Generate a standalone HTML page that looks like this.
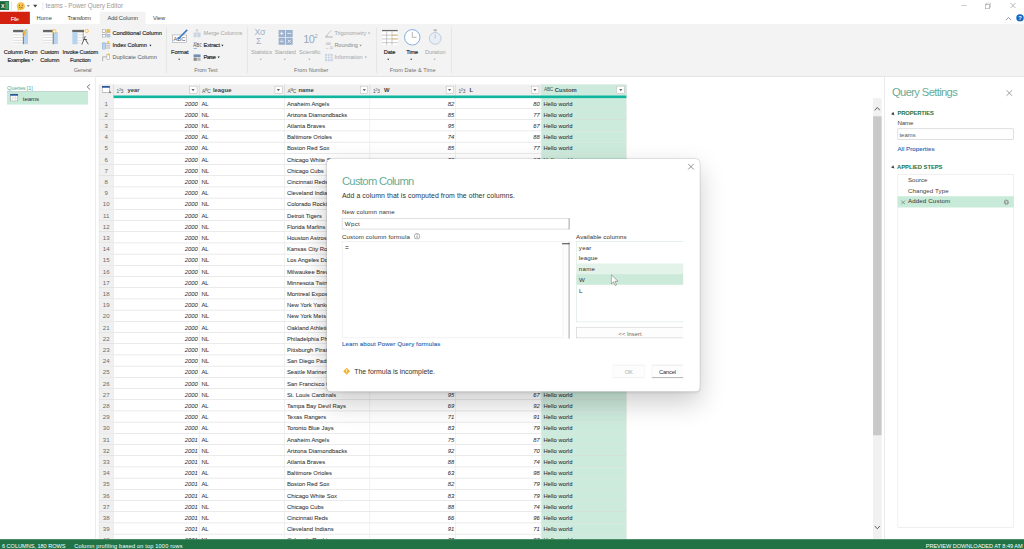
<!DOCTYPE html>
<html lang="en"><head><meta charset="utf-8"><title>teams - Power Query Editor</title>
<style>
*{box-sizing:border-box;margin:0;padding:0}
html,body{width:1024px;height:549px;overflow:hidden;background:#fff}
body{font-family:"Liberation Sans",sans-serif;font-size:11.5px;color:#333}
#stage{position:absolute;left:0;top:0;width:1920px;height:1030px;transform:scale(0.533333);transform-origin:0 0;background:#fff;overflow:hidden}
.abs{position:absolute}
i{font-style:normal}
.t{position:absolute;white-space:nowrap;line-height:16px;height:16px}
.g{color:#a3a3a3}
/* title bar */
#title{position:absolute;left:0;top:0;width:1920px;height:23px;background:#fff}
#tabs{position:absolute;left:0;top:22px;width:1920px;height:23px;background:#fff}
#file{position:absolute;left:0;top:0;width:56px;height:23px;background:#d4200f;color:#fff;text-align:center;line-height:23px}
#acttab{position:absolute;left:187px;top:0;width:86px;height:24px;background:#f3f3f3}
#ribbon{position:absolute;left:0;top:45px;width:1920px;height:99px;background:#f3f3f3;border-bottom:1px solid #d6d6d6}
.sep{position:absolute;top:6px;width:1px;height:86px;background:#dcdcdc}
.gl{position:absolute;top:80px;color:#777;font-size:11px;line-height:16px;white-space:nowrap;transform:translateX(-50%)}
.bl{position:absolute;white-space:nowrap;line-height:15px;text-align:center;transform:translateX(-50%)}
/* queries pane */
#qpane{position:absolute;left:0;top:144px;width:180px;height:867px;background:#fff;border-right:1px solid #dedede}
/* table */
#grid{position:absolute;left:185px;top:158px;width:990.2px;height:853px;overflow:hidden}
.h{position:absolute;left:0;top:0;height:21px;width:990px;background:#f0f0f0}
.hc{position:absolute;top:0;height:21px;border-right:1px solid #d0d0d0;line-height:21px;font-weight:bold;color:#444;font-size:11px}
.hc .dd{position:absolute;right:3px;top:3px;width:15px;height:15px;border:1px solid #b5b5b5;background:#fff}
.hc .dd:after{content:"";position:absolute;left:3.5px;top:5px;border-left:3px solid transparent;border-right:3px solid transparent;border-top:4px solid #666}
.teal{position:absolute;left:28.4px;top:21px;width:961.8px;height:5px;background:#0fb59d;z-index:2}
.r{position:absolute;left:0;height:21px;width:990px;white-space:nowrap}
.r i{position:absolute;top:0;height:21px;line-height:22px;border-bottom:1px solid #d8d8d8;border-right:1px solid #e4e4e4;overflow:hidden;font-size:11px;color:#333;-webkit-text-stroke:.1px}
.r .n{left:0;width:28.4px;background:#f0f0f0;color:#6a6a6a;-webkit-text-stroke:0;border-left:1px solid #d4d4d4;text-align:center;font-size:11.5px}
.r .num{text-align:right;font-style:italic;padding-right:2px}
.r .c{padding-left:4px}
.sel{background:#cdebdc}
/* right pane */
#rpane{position:absolute;left:1658px;top:144px;width:262px;height:867px;background:#fff;border-left:1px solid #d9d9d9}
/* status */
#status{position:absolute;left:0;top:1011px;width:1920px;height:19px;background:#217346;color:#fff;font-size:10.5px;line-height:19px}
/* dialog */
#dlg{position:absolute;left:613px;top:298px;width:699px;height:436px;background:#fff;border-radius:8px;box-shadow:0 0 0 1px rgba(0,0,0,.12),0 2px 5px rgba(0,0,0,.10),0 20px 50px rgba(0,0,0,.20)}
#dlgin{position:absolute;left:2px;top:0}
.inp{position:absolute;border:1px solid #c6c6c6;background:#fff}
.btn{position:absolute;border:1px solid #c9c9c9;background:#fdfdfd;text-align:center;font-size:11px}
.link{color:#2b66b1}
.r i:nth-child(2),.hc:nth-child(2){left:28.4px;width:160.3px}
.r i:nth-child(3),.hc:nth-child(3){left:188.7px;width:160.3px}
.r i:nth-child(4),.hc:nth-child(4){left:349.0px;width:160.3px}
.r i:nth-child(5),.hc:nth-child(5){left:509.3px;width:160.3px}
.r i:nth-child(6),.hc:nth-child(6){left:669.6px;width:160.3px}
.r i:nth-child(7),.hc:nth-child(7){left:829.9px;width:160.3px}
.hc:nth-child(1){left:0;width:28.4px;height:26px;background:#f0f0f0;border-left:1px solid #d4d4d4}
.hc .ty{position:absolute;left:5px;top:0;font-size:9px;font-weight:normal;color:#555;letter-spacing:-0.5px}
.hc .nm{position:absolute;left:25.5px;top:0}
.ar{position:absolute;top:7px;width:0;height:0;border-left:2.7px solid transparent;border-right:2.7px solid transparent;border-top:3.2px solid #555}
#stage>.ar{top:auto}

</style></head>
<body>
<div id="stage">
<!-- TITLE BAR -->
<div id="title">
  <svg class="abs" style="left:0;top:2px" width="17" height="17" viewBox="0 0 17 17"><rect x="0" y="0" width="17" height="17" fill="#1e7145"/><rect x="9" y="2" width="7" height="13" fill="#3fa26b"/><rect x="0" y="3" width="10" height="11" fill="#185c37"/><text x="5" y="12.5" font-family="Liberation Sans,sans-serif" font-size="10" font-weight="bold" fill="#fff" text-anchor="middle">X</text></svg>
  <div class="abs" style="left:21px;top:3px;width:1px;height:16px;background:#d5d5d5"></div>
  <svg class="abs" style="left:30px;top:3px" width="18" height="19" viewBox="0 0 18 19"><path d="M4 13l-1.5 5 5-3z" fill="#f3c344"/><circle cx="9" cy="8.6" r="7" fill="#f6c94c" stroke="#e3ad2b" stroke-width="0.8"/><circle cx="6.4" cy="7" r="1.1" fill="#6b5a2a"/><circle cx="11.6" cy="7" r="1.1" fill="#a5402a"/><path d="M5.5 10.3 Q9 14 12.5 10.3" fill="none" stroke="#6b4a00" stroke-width="1.2"/></svg>
  <div class="abs" style="left:50px;top:10px;border-left:3px solid transparent;border-right:3px solid transparent;border-top:3px solid #777"></div>
  <div class="abs" style="left:62px;top:9px;border-left:4.5px solid transparent;border-right:4.5px solid transparent;border-top:5px solid #444"></div>
  <div class="abs" style="left:80px;top:3px;width:1px;height:16px;background:#d5d5d5"></div>
  <!-- window controls -->
  <div class="abs" style="left:1802px;top:10px;width:11px;height:1px;background:#aaa"></div>
  <svg class="abs" style="left:1847px;top:5px" width="11" height="12" viewBox="0 0 11 12"><path d="M2.5 3V0.5H10.5V8.5H8" fill="none" stroke="#9a9a9a"/><rect x="0.5" y="3" width="7.5" height="8.5" fill="none" stroke="#8a8a8a"/></svg>
  <svg class="abs" style="left:1894px;top:5px" width="11" height="11" viewBox="0 0 11 11"><path d="M0.5 0.5L10.5 10.5M10.5 0.5L0.5 10.5" stroke="#888" stroke-width="1.1"/></svg>
</div>
<!-- TABS -->
<div id="tabs">
  <div id="file"></div>
  <div id="acttab"></div>
  <svg class="abs" style="left:1885px;top:9px" width="12" height="8" viewBox="0 0 12 8"><path d="M1 7L6 1.5L11 7" fill="none" stroke="#777" stroke-width="1.3"/></svg>
  <svg class="abs" style="left:1905px;top:4px" width="15" height="15" viewBox="0 0 15 15"><circle cx="7.5" cy="7.5" r="7" fill="#1565c0"/><text x="7.5" y="11.5" font-family="Liberation Sans,sans-serif" font-size="11" font-weight="bold" fill="#fff" text-anchor="middle">?</text></svg>
</div>
<!-- RIBBON -->
<div id="ribbon">
  <!-- big: Column From Examples -->
  <svg class="abs" style="left:24px;top:9px" width="31" height="30" viewBox="0 0 31 30"><rect x="0.5" y="2" width="28" height="27" fill="#fff"/><rect x="0.5" y="2" width="20" height="4.5" fill="#666"/><path d="M0.5 11.5h19M0.5 16.5h19M0.5 21.5h19M0.5 26.5h19" stroke="#c6c6c6" stroke-width="1.2"/><rect x="20" y="2" width="8.5" height="27" fill="#b8d3ee"/><path d="M19.8 6v23" stroke="#5a5a5a" stroke-width="1.5"/><path d="M24.5 0l-6.5 9h3.5l-4.5 10 9-12h-3.8l5.3-7z" fill="#f5b335"/></svg>
  <!-- big: Custom Column -->
  <svg class="abs" style="left:80px;top:9px" width="31" height="30" viewBox="0 0 31 30"><rect x="0.5" y="2" width="28" height="27" fill="#fff"/><rect x="0.5" y="2" width="20" height="4.5" fill="#666"/><path d="M0.5 11.5h19M0.5 16.5h19M0.5 21.5h19M0.5 26.5h19" stroke="#c6c6c6" stroke-width="1.2"/><rect x="20" y="6" width="8.5" height="23" fill="#b8d3ee"/><path d="M19.8 6v23" stroke="#5a5a5a" stroke-width="1.5"/><circle cx="22" cy="4.5" r="3.2" fill="#fff6df" stroke="#f2b53a" stroke-width="1.6"/></svg>
  <!-- big: Invoke Custom Function -->
  <svg class="abs" style="left:135px;top:9px" width="33" height="31" viewBox="0 0 33 31"><rect x="0.5" y="2" width="25" height="27" fill="#fff"/><rect x="0.5" y="2" width="22" height="4.5" fill="#666"/><rect x="0.5" y="6.5" width="10" height="22.5" fill="#b8d3ee"/><path d="M11 11.5h12M11 16.5h11M11 21.5h9M11 26.5h7" stroke="#c6c6c6" stroke-width="1.2"/><path d="M21 6.5v14" stroke="#777" stroke-width="1.2"/><circle cx="27.5" cy="4" r="3.2" fill="#fff6df" stroke="#f2b53a" stroke-width="1.6"/><path d="M18.5 29.5L25 13.5M22 20h6M24.5 19l6 10" stroke="#4a4a4a" stroke-width="1.7" fill="none"/></svg>
  <!-- small buttons -->
  <svg class="abs" style="left:191px;top:10px" width="16" height="16" viewBox="0 0 16 16"><rect x="0.5" y="0.5" width="6" height="5" fill="#fff" stroke="#8a8a8a"/><rect x="9.5" y="0.5" width="6" height="5" fill="#f2c04f" stroke="#c99822"/><rect x="0.5" y="9.5" width="6" height="5" fill="#fff" stroke="#8a8a8a"/><rect x="9.5" y="9.5" width="6" height="5" fill="#b9d3ec" stroke="#7da2c9"/><path d="M8 6v3" stroke="#777"/></svg>
  <svg class="abs" style="left:191px;top:32px" width="16" height="16" viewBox="0 0 16 16"><rect x="0.5" y="3.5" width="6" height="12" fill="#b9d3ec" stroke="#7da2c9"/><rect x="8" y="4" width="8" height="2" fill="#b5b5b5"/><rect x="8" y="8" width="8" height="2" fill="#b5b5b5"/><rect x="8" y="12" width="8" height="2" fill="#b5b5b5"/><circle cx="12" cy="2" r="2" fill="#f2c04f"/></svg>
  <svg class="abs" style="left:191px;top:55px" width="16" height="16" viewBox="0 0 16 16"><path d="M1.5 15V6.5H9" fill="none" stroke="#777"/><rect x="9.5" y="2.5" width="5" height="9" fill="#fff" stroke="#999"/><circle cx="13" cy="2" r="2" fill="#f2c04f"/></svg>
  <div class="sep" style="left:312px"></div>
  <!-- Format -->
  <svg class="abs" style="left:322px;top:8px" width="32" height="30" viewBox="0 0 32 30"><rect x="1.5" y="12.5" width="26" height="14" fill="#fff" stroke="#9a9a9a"/><text x="14.5" y="24" font-family="Liberation Sans,sans-serif" font-size="11" fill="#555" text-anchor="middle">ABC</text><path d="M10 20L28 2l2 2L13 21z" fill="#3b78c4"/></svg>
  <svg class="abs" style="left:362px;top:10px" width="16" height="16" viewBox="0 0 16 16"><rect x="1" y="6" width="5" height="9" fill="#c9d6e4"/><rect x="9" y="6" width="5" height="9" fill="#c9d6e4"/><path d="M7.5 0v14M5 3l2.5-3 2.5 3" stroke="#b0b0b0" fill="none"/></svg>
  <svg class="abs" style="left:362px;top:32px" width="16" height="16" viewBox="0 0 16 16"><text x="0" y="12" font-family="Liberation Sans,sans-serif" font-size="9" fill="#555">ABC</text><path d="M1 3h6M1 14h6" stroke="#3b78c4"/></svg>
  <svg class="abs" style="left:362px;top:55px" width="16" height="16" viewBox="0 0 16 16"><rect x="1" y="2" width="13" height="5" fill="#6f8fb3"/><rect x="1" y="8" width="6" height="6" fill="#8a8a8a"/><rect x="8" y="8" width="6" height="6" fill="#b5b5b5"/></svg>
  <div class="sep" style="left:464px"></div>
  <!-- number -->
  <div class="abs g" style="left:477px;top:8px;width:30px;height:34px;font-size:16.5px;line-height:15.5px;color:#9db0c9;letter-spacing:-0.3px">X&#963;<br><span style="padding-left:3px">&#931;</span></div>
  <svg class="abs" style="left:521.5px;top:11px" width="27.5" height="28.5" viewBox="0 0 31 32"><rect x="0" y="0" width="14.5" height="15" fill="#9bb0cc"/><rect x="16" y="0" width="14.5" height="15" fill="#9bb0cc"/><rect x="0" y="16.5" width="14.5" height="15" fill="#9bb0cc"/><rect x="16" y="16.5" width="14.5" height="15" fill="#9bb0cc"/><path d="M3 7.5h8M7 3.5v8M19 7.5h8M3 24h8M7 20.5v1M7 26.5v1M20 21l6 6M26 21l-6 6" stroke="#fff" stroke-width="1.6"/></svg>
  <div class="abs" style="left:568.5px;top:15.5px;font-size:20.5px;line-height:26px;color:#93a8c4;letter-spacing:-1.2px">10<span style="font-size:11px;position:relative;top:-10px;left:1px">2</span></div>
  <svg class="abs" style="left:609px;top:10px" width="16" height="16" viewBox="0 0 16 16"><path d="M1 14.5h14L1 14.5L12 2" fill="none" stroke="#b0b0b0" stroke-width="1.2"/><path d="M5 14a5 5 0 0 0-1.5-3.5" fill="none" stroke="#b0b0b0"/></svg>
  <div class="abs" style="left:609px;top:33px;font-size:8px;line-height:8px;color:#9a9a9a">.00<br>&#8594;.0</div>
  <svg class="abs" style="left:609px;top:55px" width="16" height="16" viewBox="0 0 16 16"><rect x="0" y="1" width="15" height="14" fill="#c7d3e2"/><path d="M0 5.5h15M0 10h15M5 1v14M10 1v14" stroke="#fff"/></svg>
  <div class="sep" style="left:705px"></div>
  <!-- date time -->
  <svg class="abs" style="left:716px;top:10px" width="30" height="30" viewBox="0 0 30 30"><rect x="0" y="0" width="30" height="30" fill="#fff"/><rect x="0" y="1" width="30" height="2.5" fill="#666"/><path d="M0 11h30M0 18h30M0 25h30M9 4v26M19 4v26" stroke="#9a9a9a" stroke-width="1"/><path d="M19 11h11M19 18h11" stroke="#e6a11e"/></svg>
  <svg class="abs" style="left:757px;top:9px" width="32" height="32" viewBox="0 0 32 32"><circle cx="16" cy="16" r="14.5" fill="#fff" stroke="#6f9fd6" stroke-width="1.6"/><path d="M16 6v10h8" fill="none" stroke="#a0a0a0" stroke-width="1.4"/></svg>
  <svg class="abs" style="left:803px;top:8px" width="26" height="32" viewBox="0 0 26 32"><circle cx="13" cy="19" r="11" fill="#e8eef5" stroke="#b9c6d6" stroke-width="1.6"/><rect x="10" y="2" width="6" height="3" fill="#b5b5b5"/><path d="M13 5v3M13 19v-7" stroke="#b5b5b5" stroke-width="1.4"/></svg>
  <div class="sep" style="left:846px"></div>
</div>
<!-- QUERIES PANE -->
<div id="qpane">
  <svg class="abs" style="left:162px;top:13px" width="8" height="12" viewBox="0 0 8 12"><path d="M7 1L1.5 6L7 11" fill="none" stroke="#555" stroke-width="1.5"/></svg>
  <div class="abs" style="left:13px;top:27px;width:152px;height:25px;background:#c8ead9;border-top:1px solid #b9c4be"></div>
  <svg class="abs" style="left:19px;top:32px" width="15" height="14" viewBox="0 0 15 14"><rect x="0.5" y="0.5" width="14" height="13" fill="#fff" stroke="#7a7a7a"/><rect x="0" y="0" width="15" height="3.5" fill="#2b579a"/><path d="M0 8h15M5 3.5v10M10 3.5v10" stroke="#c8c8c8" stroke-width="0.8"/></svg>
</div>
<!-- GRID -->
<div id="grid">
  <div class="h">
    <div class="hc"><svg class="abs" style="left:5px;top:3px" width="18" height="15" viewBox="0 0 18 15"><rect x="0.5" y="0.5" width="14" height="12" fill="#fff" stroke="#8a8a8a"/><rect x="0" y="0" width="15" height="3.5" fill="#2b579a"/><path d="M13 11h5l-2.5 3.5z" fill="#555"/></svg></div>
    <div class="hc"><span class="ty">1<sup>2</sup>3</span><span class="nm">year</span><span class="dd"></span></div>
    <div class="hc"><span class="ty">A<sup>B</sup>C</span><span class="nm">league</span><span class="dd"></span></div>
    <div class="hc"><span class="ty">A<sup>B</sup>C</span><span class="nm">name</span><span class="dd"></span></div>
    <div class="hc"><span class="ty">1<sup>2</sup>3</span><span class="nm">W</span><span class="dd"></span></div>
    <div class="hc"><span class="ty">1<sup>2</sup>3</span><span class="nm">L</span><span class="dd"></span></div>
    <div class="hc sel"><span class="ty">ABC<br></span><span class="nm">Custom</span><span class="dd"></span></div>
  </div>
  <div class="teal"></div>
<div class="r" style="top:25px"><i class="n">1</i><i class="c num">2000</i><i class="c">AL</i><i class="c">Anaheim Angels</i><i class="c num">82</i><i class="c num">80</i><i class="c sel">Hello world</i></div>
<div class="r" style="top:46px"><i class="n">2</i><i class="c num">2000</i><i class="c">NL</i><i class="c">Arizona Diamondbacks</i><i class="c num">85</i><i class="c num">77</i><i class="c sel">Hello world</i></div>
<div class="r" style="top:67px"><i class="n">3</i><i class="c num">2000</i><i class="c">NL</i><i class="c">Atlanta Braves</i><i class="c num">95</i><i class="c num">67</i><i class="c sel">Hello world</i></div>
<div class="r" style="top:88px"><i class="n">4</i><i class="c num">2000</i><i class="c">AL</i><i class="c">Baltimore Orioles</i><i class="c num">74</i><i class="c num">88</i><i class="c sel">Hello world</i></div>
<div class="r" style="top:109px"><i class="n">5</i><i class="c num">2000</i><i class="c">AL</i><i class="c">Boston Red Sox</i><i class="c num">85</i><i class="c num">77</i><i class="c sel">Hello world</i></div>
<div class="r" style="top:130px"><i class="n">6</i><i class="c num">2000</i><i class="c">AL</i><i class="c">Chicago White Sox</i><i class="c num">95</i><i class="c num">67</i><i class="c sel">Hello world</i></div>
<div class="r" style="top:151px"><i class="n">7</i><i class="c num">2000</i><i class="c">NL</i><i class="c">Chicago Cubs</i><i class="c num">65</i><i class="c num">97</i><i class="c sel">Hello world</i></div>
<div class="r" style="top:172px"><i class="n">8</i><i class="c num">2000</i><i class="c">NL</i><i class="c">Cincinnati Reds</i><i class="c num">85</i><i class="c num">77</i><i class="c sel">Hello world</i></div>
<div class="r" style="top:193px"><i class="n">9</i><i class="c num">2000</i><i class="c">AL</i><i class="c">Cleveland Indians</i><i class="c num">90</i><i class="c num">72</i><i class="c sel">Hello world</i></div>
<div class="r" style="top:214px"><i class="n">10</i><i class="c num">2000</i><i class="c">NL</i><i class="c">Colorado Rockies</i><i class="c num">82</i><i class="c num">80</i><i class="c sel">Hello world</i></div>
<div class="r" style="top:235px"><i class="n">11</i><i class="c num">2000</i><i class="c">AL</i><i class="c">Detroit Tigers</i><i class="c num">79</i><i class="c num">83</i><i class="c sel">Hello world</i></div>
<div class="r" style="top:256px"><i class="n">12</i><i class="c num">2000</i><i class="c">NL</i><i class="c">Florida Marlins</i><i class="c num">79</i><i class="c num">82</i><i class="c sel">Hello world</i></div>
<div class="r" style="top:277px"><i class="n">13</i><i class="c num">2000</i><i class="c">NL</i><i class="c">Houston Astros</i><i class="c num">72</i><i class="c num">90</i><i class="c sel">Hello world</i></div>
<div class="r" style="top:298px"><i class="n">14</i><i class="c num">2000</i><i class="c">AL</i><i class="c">Kansas City Royals</i><i class="c num">77</i><i class="c num">85</i><i class="c sel">Hello world</i></div>
<div class="r" style="top:319px"><i class="n">15</i><i class="c num">2000</i><i class="c">NL</i><i class="c">Los Angeles Dodgers</i><i class="c num">86</i><i class="c num">76</i><i class="c sel">Hello world</i></div>
<div class="r" style="top:340px"><i class="n">16</i><i class="c num">2000</i><i class="c">NL</i><i class="c">Milwaukee Brewers</i><i class="c num">73</i><i class="c num">89</i><i class="c sel">Hello world</i></div>
<div class="r" style="top:361px"><i class="n">17</i><i class="c num">2000</i><i class="c">AL</i><i class="c">Minnesota Twins</i><i class="c num">69</i><i class="c num">93</i><i class="c sel">Hello world</i></div>
<div class="r" style="top:382px"><i class="n">18</i><i class="c num">2000</i><i class="c">NL</i><i class="c">Montreal Expos</i><i class="c num">67</i><i class="c num">95</i><i class="c sel">Hello world</i></div>
<div class="r" style="top:403px"><i class="n">19</i><i class="c num">2000</i><i class="c">AL</i><i class="c">New York Yankees</i><i class="c num">87</i><i class="c num">74</i><i class="c sel">Hello world</i></div>
<div class="r" style="top:424px"><i class="n">20</i><i class="c num">2000</i><i class="c">NL</i><i class="c">New York Mets</i><i class="c num">94</i><i class="c num">68</i><i class="c sel">Hello world</i></div>
<div class="r" style="top:445px"><i class="n">21</i><i class="c num">2000</i><i class="c">AL</i><i class="c">Oakland Athletics</i><i class="c num">91</i><i class="c num">70</i><i class="c sel">Hello world</i></div>
<div class="r" style="top:466px"><i class="n">22</i><i class="c num">2000</i><i class="c">NL</i><i class="c">Philadelphia Phillies</i><i class="c num">65</i><i class="c num">97</i><i class="c sel">Hello world</i></div>
<div class="r" style="top:487px"><i class="n">23</i><i class="c num">2000</i><i class="c">NL</i><i class="c">Pittsburgh Pirates</i><i class="c num">69</i><i class="c num">93</i><i class="c sel">Hello world</i></div>
<div class="r" style="top:508px"><i class="n">24</i><i class="c num">2000</i><i class="c">NL</i><i class="c">San Diego Padres</i><i class="c num">76</i><i class="c num">86</i><i class="c sel">Hello world</i></div>
<div class="r" style="top:529px"><i class="n">25</i><i class="c num">2000</i><i class="c">AL</i><i class="c">Seattle Mariners</i><i class="c num">91</i><i class="c num">71</i><i class="c sel">Hello world</i></div>
<div class="r" style="top:550px"><i class="n">26</i><i class="c num">2000</i><i class="c">NL</i><i class="c">San Francisco Giants</i><i class="c num">97</i><i class="c num">65</i><i class="c sel">Hello world</i></div>
<div class="r" style="top:571px"><i class="n">27</i><i class="c num">2000</i><i class="c">NL</i><i class="c">St. Louis Cardinals</i><i class="c num">95</i><i class="c num">67</i><i class="c sel">Hello world</i></div>
<div class="r" style="top:592px"><i class="n">28</i><i class="c num">2000</i><i class="c">AL</i><i class="c">Tampa Bay Devil Rays</i><i class="c num">69</i><i class="c num">92</i><i class="c sel">Hello world</i></div>
<div class="r" style="top:613px"><i class="n">29</i><i class="c num">2000</i><i class="c">AL</i><i class="c">Texas Rangers</i><i class="c num">71</i><i class="c num">91</i><i class="c sel">Hello world</i></div>
<div class="r" style="top:634px"><i class="n">30</i><i class="c num">2000</i><i class="c">AL</i><i class="c">Toronto Blue Jays</i><i class="c num">83</i><i class="c num">79</i><i class="c sel">Hello world</i></div>
<div class="r" style="top:655px"><i class="n">31</i><i class="c num">2001</i><i class="c">AL</i><i class="c">Anaheim Angels</i><i class="c num">75</i><i class="c num">87</i><i class="c sel">Hello world</i></div>
<div class="r" style="top:676px"><i class="n">32</i><i class="c num">2001</i><i class="c">NL</i><i class="c">Arizona Diamondbacks</i><i class="c num">92</i><i class="c num">70</i><i class="c sel">Hello world</i></div>
<div class="r" style="top:697px"><i class="n">33</i><i class="c num">2001</i><i class="c">NL</i><i class="c">Atlanta Braves</i><i class="c num">88</i><i class="c num">74</i><i class="c sel">Hello world</i></div>
<div class="r" style="top:718px"><i class="n">34</i><i class="c num">2001</i><i class="c">AL</i><i class="c">Baltimore Orioles</i><i class="c num">63</i><i class="c num">98</i><i class="c sel">Hello world</i></div>
<div class="r" style="top:739px"><i class="n">35</i><i class="c num">2001</i><i class="c">AL</i><i class="c">Boston Red Sox</i><i class="c num">82</i><i class="c num">79</i><i class="c sel">Hello world</i></div>
<div class="r" style="top:760px"><i class="n">36</i><i class="c num">2001</i><i class="c">AL</i><i class="c">Chicago White Sox</i><i class="c num">83</i><i class="c num">79</i><i class="c sel">Hello world</i></div>
<div class="r" style="top:781px"><i class="n">37</i><i class="c num">2001</i><i class="c">NL</i><i class="c">Chicago Cubs</i><i class="c num">88</i><i class="c num">74</i><i class="c sel">Hello world</i></div>
<div class="r" style="top:802px"><i class="n">38</i><i class="c num">2001</i><i class="c">NL</i><i class="c">Cincinnati Reds</i><i class="c num">66</i><i class="c num">96</i><i class="c sel">Hello world</i></div>
<div class="r" style="top:823px"><i class="n">39</i><i class="c num">2001</i><i class="c">AL</i><i class="c">Cleveland Indians</i><i class="c num">91</i><i class="c num">71</i><i class="c sel">Hello world</i></div>
<div class="r" style="top:844px"><i class="n">40</i><i class="c num">2001</i><i class="c">NL</i><i class="c">Colorado Rockies</i><i class="c num">73</i><i class="c num">89</i><i class="c sel">Hello world</i></div>
</div>
<!-- grid scrollbar -->
<div class="abs" style="left:1637px;top:184px;width:16px;height:827px;background:#f1f1f1"></div>
<div class="abs" style="left:1637px;top:218px;width:16px;height:598px;background:#c9c9c9"></div>
<svg class="abs" style="left:1639px;top:200px" width="12" height="8" viewBox="0 0 12 8"><path d="M1 7L6 1.5L11 7" fill="none" stroke="#444" stroke-width="1.6"/></svg>
<svg class="abs" style="left:1639px;top:985px" width="12" height="8" viewBox="0 0 12 8"><path d="M1 1L6 6.5L11 1" fill="none" stroke="#444" stroke-width="1.6"/></svg>
<!-- RIGHT PANE -->
<div id="rpane">
  <svg class="abs" style="left:227px;top:24px" width="13" height="13" viewBox="0 0 13 13"><path d="M1 1L12 12M12 1L1 12" stroke="#7a7a7a" stroke-width="1.3"/></svg>
  <div class="abs" style="left:13px;top:67px;border-left:3px solid transparent;border-right:3px solid transparent;border-bottom:6px solid #444;transform:rotate(135deg)"></div>
  <div class="inp" style="left:24px;top:97px;width:218px;height:21px"></div>
  <div class="abs" style="left:13px;top:167px;border-left:3px solid transparent;border-right:3px solid transparent;border-bottom:6px solid #444;transform:rotate(135deg)"></div>
  <div class="inp" style="left:24px;top:183px;width:218px;height:663px;border-color:#e3e3e3"></div>
  <div class="abs" style="left:24px;top:224px;width:218px;height:21px;background:#c8ead9"></div>
  <svg class="abs" style="left:30px;top:231px" width="9" height="9" viewBox="0 0 9 9"><path d="M1 1L8 8M8 1L1 8" stroke="#666" stroke-width="1.2"/></svg>
  <svg class="abs" style="left:222px;top:229px" width="12" height="12" viewBox="0 0 12 12"><circle cx="6" cy="6" r="3.6" fill="none" stroke="#8a8a8a" stroke-width="2.4" stroke-dasharray="1.9 0.93"/><circle cx="6" cy="6" r="2.6" fill="none" stroke="#8a8a8a" stroke-width="1"/></svg>
</div>
<!-- STATUS -->
<div id="status">
</div>
<div class="t" id="ttl" style="left:85.5px;top:3.1px;font-size:12px;color:#9c9c9c;letter-spacing:-0.115px;">teams - Power Query Editor</div>
<div class="t" id="fileT" style="left:20.1px;top:27.0px;font-size:10.8px;color:#fff;letter-spacing:-0.634px;">File</div>
<div class="t" id="tb1" style="left:68.4px;top:26.4px;font-size:10.8px;color:#444;letter-spacing:0.018px;">Home</div>
<div class="t" id="tb2" style="left:126.6px;top:26.4px;font-size:10.8px;color:#444;letter-spacing:-0.557px;">Transform</div>
<div class="t" id="tb3" style="left:201.6px;top:26.4px;font-size:10.8px;color:#444;letter-spacing:-0.235px;">Add Column</div>
<div class="t" id="tb4" style="left:286.9px;top:26.4px;font-size:10.8px;color:#444;letter-spacing:-0.205px;">View</div>
<div class="t" id="b1a" style="left:7.0px;top:89.2px;font-size:10.6px;color:#2a2a2a;letter-spacing:-0.085px;-webkit-text-stroke:.3px;">Column From</div>
<div class="t" id="b1b" style="left:14.1px;top:104.2px;font-size:10.6px;color:#2a2a2a;letter-spacing:-0.577px;-webkit-text-stroke:.3px;">Examples<b class="ar" style="left:44.8px;border-top-color:#2a2a2a"></b></div>
<div class="t" id="b2a" style="left:76.1px;top:89.2px;font-size:10.6px;color:#2a2a2a;letter-spacing:-0.449px;-webkit-text-stroke:.3px;">Custom</div>
<div class="t" id="b2b" style="left:75.5px;top:104.2px;font-size:10.6px;color:#2a2a2a;letter-spacing:-0.111px;-webkit-text-stroke:.3px;">Column</div>
<div class="t" id="b3a" style="left:117.2px;top:89.2px;font-size:10.6px;color:#2a2a2a;letter-spacing:-0.327px;-webkit-text-stroke:.3px;">Invoke Custom</div>
<div class="t" id="b3b" style="left:131.2px;top:104.2px;font-size:10.6px;color:#2a2a2a;letter-spacing:-0.269px;-webkit-text-stroke:.3px;">Function</div>
<div class="t" id="s1" style="left:210.8px;top:54.4px;font-size:10.6px;color:#2a2a2a;letter-spacing:0.004px;-webkit-text-stroke:.3px;">Conditional Column</div>
<div class="t" id="s2" style="left:210.8px;top:76.7px;font-size:10.6px;color:#2a2a2a;letter-spacing:-0.084px;-webkit-text-stroke:.3px;">Index Column<b class="ar" style="left:69.6px;border-top-color:#2a2a2a"></b></div>
<div class="t" id="s3" style="left:210.8px;top:99.0px;font-size:10.6px;color:#5a5a5a;letter-spacing:-0.030px;">Duplicate Column</div>
<div class="t" id="f1" style="left:320.8px;top:89.4px;font-size:10.6px;color:#2a2a2a;letter-spacing:-0.136px;-webkit-text-stroke:.3px;">Format</div>
<div class="t" id="m1" style="left:381.8px;top:54.4px;font-size:10.6px;color:#a6a6a6;letter-spacing:-0.185px;">Merge Columns</div>
<div class="t" id="m2" style="left:381.8px;top:76.7px;font-size:10.6px;color:#2a2a2a;letter-spacing:-0.370px;-webkit-text-stroke:.3px;">Extract<b class="ar" style="left:33.4px;border-top-color:#2a2a2a"></b></div>
<div class="t" id="m3" style="left:381.8px;top:99.0px;font-size:10.6px;color:#2a2a2a;letter-spacing:-1.194px;-webkit-text-stroke:.3px;">Parse<b class="ar" style="left:26.3px;border-top-color:#2a2a2a"></b></div>
<div class="t" id="n1" style="left:470.6px;top:89.4px;font-size:10.6px;color:#a6a6a6;letter-spacing:-0.317px;">Statistics</div>
<div class="t" id="n2" style="left:515.2px;top:89.4px;font-size:10.6px;color:#a6a6a6;letter-spacing:-0.483px;">Standard</div>
<div class="t" id="n3" style="left:560.8px;top:89.4px;font-size:10.6px;color:#a6a6a6;letter-spacing:-0.258px;">Scientific</div>
<div class="t" id="n4" style="left:627.0px;top:54.4px;font-size:10.6px;color:#a6a6a6;letter-spacing:-0.200px;">Trigonometry<b class="ar" style="left:63.3px;border-top-color:#a6a6a6"></b></div>
<div class="t" id="n5" style="left:627.0px;top:76.7px;font-size:10.6px;color:#8a8a8a;letter-spacing:-0.210px;">Rounding<b class="ar" style="left:46.7px;border-top-color:#8a8a8a"></b></div>
<div class="t" id="n6" style="left:627.0px;top:99.0px;font-size:10.6px;color:#a6a6a6;letter-spacing:0.015px;">Information<b class="ar" style="left:57.2px;border-top-color:#a6a6a6"></b></div>
<div class="t" id="d1" style="left:719.5px;top:89.4px;font-size:10.6px;color:#222;letter-spacing:-0.237px;-webkit-text-stroke:.3px;">Date</div>
<div class="t" id="d2" style="left:761.7px;top:89.4px;font-size:10.6px;color:#222;letter-spacing:-0.268px;-webkit-text-stroke:.3px;">Time</div>
<div class="t" id="d3" style="left:796.9px;top:89.4px;font-size:10.6px;color:#a6a6a6;letter-spacing:-0.190px;">Duration</div>
<div class="t" id="gl1" style="left:138.3px;top:124.3px;font-size:10.4px;color:#707070;letter-spacing:-0.639px;">General</div>
<div class="t" id="gl2" style="left:364.2px;top:124.3px;font-size:10.4px;color:#707070;letter-spacing:-0.305px;">From Text</div>
<div class="t" id="gl3" style="left:551.4px;top:124.3px;font-size:10.4px;color:#707070;letter-spacing:0.039px;">From Number</div>
<div class="t" id="gl4" style="left:730.8px;top:124.3px;font-size:10.4px;color:#707070;letter-spacing:0.108px;">From Date &amp; Time</div>
<div class="t" id="q1" style="left:13.1px;top:155.8px;font-size:10.8px;color:#62ad96;letter-spacing:-0.440px;">Queries [1]</div>
<div class="t" id="q2" style="left:42.9px;top:177.5px;font-size:11.5px;color:#333;letter-spacing:-0.253px;">teams</div>
<div class="t" id="r0" style="left:1672.5px;top:164.7px;font-size:21px;color:#66ad98;letter-spacing:-1.192px;">Query Settings</div>
<div class="t" id="r1" style="left:1682.6px;top:203.9px;font-size:11px;color:#217346;letter-spacing:-0.280px;font-weight:bold;">PROPERTIES</div>
<div class="t" id="r2" style="left:1682.6px;top:222.9px;font-size:11.5px;color:#444;letter-spacing:-0.196px;">Name</div>
<div class="t" id="r3" style="left:1686.4px;top:243.7px;font-size:11px;color:#555;letter-spacing:0.090px;">teams</div>
<div class="t" id="r4" style="left:1682.6px;top:270.5px;font-size:11.5px;color:#2b66b1;letter-spacing:0.087px;-webkit-text-stroke:.2px;">All Properties</div>
<div class="t" id="r5" style="left:1681.9px;top:304.8px;font-size:11px;color:#217346;letter-spacing:-0.119px;font-weight:bold;">APPLIED STEPS</div>
<div class="t" id="r6" style="left:1702.3px;top:329.7px;font-size:11.5px;color:#444;letter-spacing:0.057px;">Source</div>
<div class="t" id="r7" style="left:1702.3px;top:349.8px;font-size:11.5px;color:#444;letter-spacing:0.148px;">Changed Type</div>
<div class="t" id="r8" style="left:1702.3px;top:368.9px;font-size:11.5px;color:#333;letter-spacing:0.298px;">Added Custom</div>
<div class="t" id="st1" style="left:3.8px;top:1015.2px;font-size:10.5px;color:#fff;letter-spacing:-0.072px;">6 COLUMNS, 180 ROWS</div>
<div class="t" id="st2" style="left:139.1px;top:1014.6px;font-size:10.5px;color:#fff;letter-spacing:0.321px;">Column profiling based on top 1000 rows</div>
<div class="t" id="st3" style="left:1735.7px;top:1015.2px;font-size:10.5px;color:#fff;letter-spacing:-0.081px;">PREVIEW DOWNLOADED AT 8:49 AM</div>
<b class="ar" style="left:334.3px;top:110.2px;border-top-color:#444"></b>
<b class="ar" style="left:487.1px;top:110.2px;border-top-color:#a6a6a6"></b>
<b class="ar" style="left:532.1px;top:110.2px;border-top-color:#a6a6a6"></b>
<b class="ar" style="left:577.8px;top:110.2px;border-top-color:#a6a6a6"></b>
<b class="ar" style="left:726.4px;top:110.2px;border-top-color:#333"></b>
<b class="ar" style="left:769.3px;top:110.2px;border-top-color:#333"></b>
<b class="ar" style="left:812.6px;top:110.2px;border-top-color:#a6a6a6"></b>
<!-- DIALOG -->
<div id="dlg"><div id="dlgin">
  <svg class="abs" style="left:674px;top:8px" width="13" height="13" viewBox="0 0 13 13"><path d="M1 1L12 12M12 1L1 12" stroke="#666" stroke-width="1.3"/></svg>
  <div class="inp" style="left:26px;top:111px;width:427px;height:21px"></div>
  <svg class="abs" style="left:161px;top:139px" width="12" height="12" viewBox="0 0 12 12"><circle cx="6" cy="6" r="5.2" fill="none" stroke="#666" stroke-width="1"/><path d="M6 5v4" stroke="#555" stroke-width="1.3"/><circle cx="6" cy="3.2" r="0.8" fill="#555"/></svg>
  <div class="inp" style="left:26px;top:154px;width:427px;height:182px;border-color:#e6e6e6"></div>
  <div class="abs" style="left:440px;top:155px;width:12px;height:181px;background:#fdfdfd;border-left:1px solid #ececec"></div>
  <div class="abs" style="left:451px;top:156px;width:1.6px;height:181px;background:#b4b4b4"></div>
  <div class="abs" style="left:451px;top:111px;width:1.6px;height:21px;background:#b4b4b4"></div>
  <div class="abs" style="left:439px;top:157.5px;width:13.5px;height:2.2px;background:#4a4a4a"></div>
  <div class="inp" style="left:465px;top:154px;width:201px;height:152px;border-color:#cfe5da;border-right:none"></div>
  <div class="abs" style="left:466px;top:196px;width:200px;height:20px;background:#e3f3ea"></div>
  <div class="abs" style="left:466px;top:216px;width:200px;height:20px;background:#cbead9"></div>
  <div class="btn" style="left:465px;top:315px;width:201px;height:21px;line-height:19px;color:#777;border-right:none"></div>
  <svg class="abs" style="left:28px;top:391px" width="14" height="14" viewBox="0 0 14 14"><path d="M7 0.5L13.5 7L7 13.5L0.5 7z" fill="#f0b429"/><path d="M7 3.5v4.5" stroke="#fff" stroke-width="1.6"/><circle cx="7" cy="10.2" r="0.9" fill="#fff"/></svg>
  <div class="btn" style="left:534px;top:386px;width:60px;height:25px;border-color:#e3e3e3 #f4f4f4"></div>
  <div class="btn" style="left:607px;top:386px;width:59px;height:25px;border-color:#dcdcdc #f0f0f0;border-bottom:2px solid #b9b9b9;border-right:none"></div>
  <!-- mouse cursor -->
  <svg class="abs" style="left:529.5px;top:215.5px" width="16" height="24" viewBox="0 0 14 21"><path d="M1 1v15l3.6-3.4 2.6 6 2.4-1-2.6-5.9H12z" fill="#fff" stroke="#777" stroke-width="1"/></svg>
</div></div>
<div class="t" id="g0" style="left:641.1px;top:331.2px;font-size:21px;color:#66ad98;letter-spacing:-1.230px;">Custom Column</div>
<div class="t" id="g1" style="left:641.1px;top:360.4px;font-size:13px;color:#333;letter-spacing:0.112px;">Add a column that is computed from the other columns.</div>
<div class="t" id="g2" style="left:641.1px;top:390.3px;font-size:11.5px;color:#333;letter-spacing:0.273px;">New column name</div>
<div class="t" id="g3" style="left:646.5px;top:411.1px;font-size:11.5px;color:#333;letter-spacing:0.656px;">Wpct</div>
<div class="t" id="g4" style="left:641.1px;top:435.7px;font-size:11.5px;color:#333;letter-spacing:0.296px;">Custom column formula</div>
<div class="t" id="g5" style="left:647.1px;top:455.5px;font-size:12px;color:#222;letter-spacing:-0.453px;-webkit-text-stroke:.3px;font-family:"Liberation Mono",monospace;">=</div>
<div class="t" id="g6" style="left:1080.2px;top:435.7px;font-size:11.5px;color:#333;letter-spacing:0.145px;">Available columns</div>
<div class="t" id="c1" style="left:1085.4px;top:456.9px;font-size:11.5px;color:#333;letter-spacing:0.357px;">year</div>
<div class="t" id="c2" style="left:1085.4px;top:476.4px;font-size:11.5px;color:#333;letter-spacing:0.162px;">league</div>
<div class="t" id="c3" style="left:1085.4px;top:497.0px;font-size:11.5px;color:#333;letter-spacing:0.402px;">name</div>
<div class="t" id="c4" style="left:1085.6px;top:516.4px;font-size:11.5px;color:#333;letter-spacing:0.391px;">W</div>
<div class="t" id="c5" style="left:1085.6px;top:536.5px;font-size:11.5px;color:#333;letter-spacing:-0.781px;">L</div>
<div class="t" id="ins" style="left:1159.9px;top:618.2px;font-size:11px;color:#6a6a6a;letter-spacing:-0.057px;">&lt;&lt; Insert</div>
<div class="t" id="g7" style="left:641.1px;top:637.2px;font-size:11.5px;color:#2b66b1;letter-spacing:0.175px;-webkit-text-stroke:.2px;">Learn about Power Query formulas</div>
<div class="t" id="g8" style="left:664.3px;top:689.1px;font-size:13px;color:#333;letter-spacing:-0.052px;">The formula is incomplete.</div>
<div class="t" id="okT" style="left:1171.3px;top:688.8px;font-size:11px;color:#aaa;letter-spacing:-0.479px;">OK</div>
<div class="t" id="caT" style="left:1235.8px;top:689.0px;font-size:11px;color:#333;letter-spacing:-0.500px;">Cancel</div>

</div>
</body></html>
